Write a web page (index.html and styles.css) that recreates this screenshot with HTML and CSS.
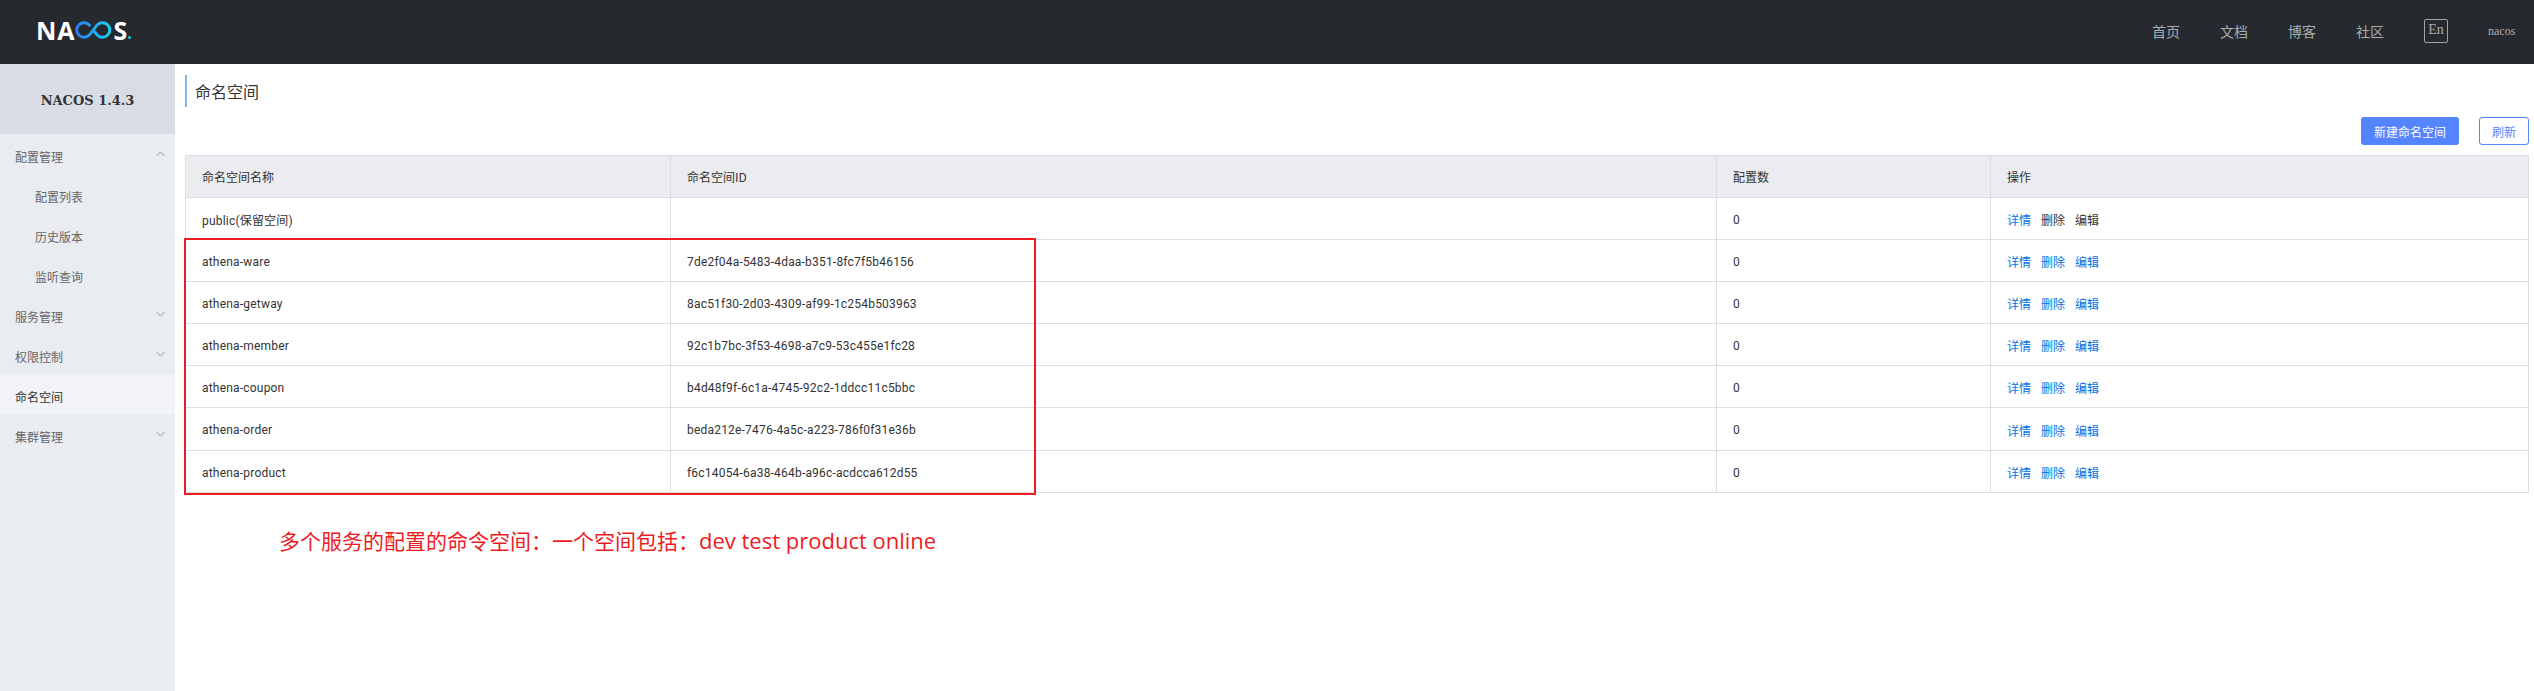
FILE: index.html
```html
<!DOCTYPE html>
<html lang="zh">
<head>
<meta charset="utf-8">
<title>Nacos</title>
<link rel="stylesheet" href="styles.css">
</head>
<body>
<header class="topbar">
  <div class="logo">
    <span class="logo-text">NA</span>
    <svg class="logo-inf" width="37" height="18" viewBox="0 0 37 18" aria-hidden="true">
      <defs><linearGradient id="inf" x1="0" x2="1" y1="0" y2="0"><stop offset="0" stop-color="#2e7bf5"/><stop offset="1" stop-color="#17d0f0"/></linearGradient></defs>
      <path d="M14.5 4.2A7.3 7.3 0 1 0 14.5 13.8L22 4.2A7.3 7.3 0 1 1 22 13.8L19.8 11" fill="none" stroke="url(#inf)" stroke-width="3" stroke-linecap="round"/>
    </svg>
    <span class="logo-text">S</span>
    <span class="logo-dot"></span>
  </div>
  <nav class="topnav">
    <a class="topnav-link">首页</a>
    <a class="topnav-link">文档</a>
    <a class="topnav-link">博客</a>
    <a class="topnav-link">社区</a>
    <span class="lang">En</span>
    <span class="user">nacos</span>
  </nav>
</header>
<div class="shell">
  <aside class="sidebar">
    <div class="brand">NACOS 1.4.3</div>
    <ul class="menu">
      <li class="menu-item">配置管理<svg class="chev" width="9" height="6" viewBox="0 0 9 6"><path d="M.5 5 4.5 1l4 4" fill="none" stroke="#999"/></svg></li>
      <li class="menu-item sub">配置列表</li>
      <li class="menu-item sub">历史版本</li>
      <li class="menu-item sub">监听查询</li>
      <li class="menu-item">服务管理<svg class="chev" width="9" height="6" viewBox="0 0 9 6"><path d="M.5 1l4 4 4-4" fill="none" stroke="#999"/></svg></li>
      <li class="menu-item">权限控制<svg class="chev" width="9" height="6" viewBox="0 0 9 6"><path d="M.5 1l4 4 4-4" fill="none" stroke="#999"/></svg></li>
      <li class="menu-item active">命名空间</li>
      <li class="menu-item">集群管理<svg class="chev" width="9" height="6" viewBox="0 0 9 6"><path d="M.5 1l4 4 4-4" fill="none" stroke="#999"/></svg></li>
    </ul>
  </aside>
  <main class="content">
    <h1 class="title">命名空间</h1>
    <div class="actions">
      <button class="btn primary">新建命名空间</button>
      <button class="btn outline">刷新</button>
    </div>
    <table class="grid">
      <colgroup><col class="c1"><col class="c2"><col class="c3"><col class="c4"></colgroup>
      <thead><tr><th>命名空间名称</th><th>命名空间ID</th><th>配置数</th><th>操作</th></tr></thead>
      <tbody>
        <tr><td>public(保留空间)</td><td></td><td>0</td><td><a class="op">详情</a><a class="op off">删除</a><a class="op off">编辑</a></td></tr>
        <tr><td>athena-ware</td><td>7de2f04a-5483-4daa-b351-8fc7f5b46156</td><td>0</td><td><a class="op">详情</a><a class="op">删除</a><a class="op">编辑</a></td></tr>
        <tr><td>athena-getway</td><td>8ac51f30-2d03-4309-af99-1c254b503963</td><td>0</td><td><a class="op">详情</a><a class="op">删除</a><a class="op">编辑</a></td></tr>
        <tr><td>athena-member</td><td>92c1b7bc-3f53-4698-a7c9-53c455e1fc28</td><td>0</td><td><a class="op">详情</a><a class="op">删除</a><a class="op">编辑</a></td></tr>
        <tr><td>athena-coupon</td><td>b4d48f9f-6c1a-4745-92c2-1ddcc11c5bbc</td><td>0</td><td><a class="op">详情</a><a class="op">删除</a><a class="op">编辑</a></td></tr>
        <tr class="tall"><td>athena-order</td><td>beda212e-7476-4a5c-a223-786f0f31e36b</td><td>0</td><td><a class="op">详情</a><a class="op">删除</a><a class="op">编辑</a></td></tr>
        <tr><td>athena-product</td><td>f6c14054-6a38-464b-a96c-acdcca612d55</td><td>0</td><td><a class="op">详情</a><a class="op">删除</a><a class="op">编辑</a></td></tr>
      </tbody>
    </table>
  </main>
</div>
<div class="redbox"></div>
<div class="note">多个服务的配置的命令空间：一个空间包括：<span class="note-latin">dev test product online</span></div>
</body>
</html>
```
FILE: styles.css
```css
* { box-sizing: border-box; }
html, body { margin: 0; padding: 0; }
body {
  position: relative;
  height: 691px;
  overflow: hidden;
  background: #fff;
  color: #333;
  font: 12px Roboto, "Noto Sans CJK SC", sans-serif;
}
.topbar {
  height: 64px;
  background: #262a2f;
  display: flex;
  align-items: center;
  justify-content: space-between;
  padding: 0 19px 0 36px;
}
.logo { display: flex; align-items: center; height: 18px; margin-top: -5px; }
.logo-text {
  font: 700 25px/18px "Open Sans", sans-serif;
  color: #fff;
  letter-spacing: 1px;
}
.logo-inf { margin: 0 2px 0 -1px; }
.logo-dot {
  width: 3px; height: 3px; border-radius: 50%;
  background: #17d0f0;
  align-self: flex-end;
}
.topnav {
  display: flex;
  align-items: center;
  padding-bottom: 2px;
  font-family: "Liberation Serif", "Noto Sans CJK SC", serif;
  color: #a9adb0;
}
.topnav-link { font-size: 14px; margin-right: 40px; }
.lang {
  width: 24px; height: 24px;
  border: 1px solid #a0a4a7;
  border-radius: 2px;
  font-size: 14px;
  line-height: 20px;
  text-align: center;
  margin-right: 40px;
}
.user { font-size: 12px; width: 27px; }
.shell { display: flex; height: 627px; }
.sidebar { width: 175px; flex: none; background: #e9ecf1; color: #666; }
.brand {
  height: 70px;
  background: #d8dde5;
  color: #333;
  font: 700 13px/74px "DejaVu Serif", "Liberation Serif", serif;
  text-align: center;
}
.menu { list-style: none; margin: 0; padding: 0; }
.menu-item {
  height: 40px;
  line-height: 46px;
  padding-left: 15px;
  position: relative;
  font-family: "Noto Sans CJK SC", sans-serif;
}
.menu-item.sub { padding-left: 35px; }
.menu-item.active { background: #f2f3f7; color: #333; }
.chev { position: absolute; right: 10px; top: 17px; }
.content { flex: 1; padding: 11px 6px 0 10px; }
.title {
  margin: 0;
  height: 32px;
  border-left: 2px solid #88b7e0;
  padding-left: 8px;
  font: 400 16px/32px "Noto Sans CJK SC", sans-serif;
  color: #333;
}
.actions { display: flex; justify-content: flex-end; gap: 20px; margin-top: 10px; }
.btn {
  height: 28px;
  border-radius: 3px;
  font: 12px "Noto Sans CJK SC", sans-serif;
  padding: 0;
}
.primary { width: 98px; background: #5584ff; border: 0; color: #fff; }
.outline { width: 50px; background: #fff; border: 1px solid #5584ff; color: #5584ff; }
.grid {
  margin-top: 10px;
  width: 2343px;
  table-layout: fixed;
  border-collapse: collapse;
  border: 1px solid #dcdee3;
}
.c1 { width: 485px; }
.c2 { width: 1046px; }
.c3 { width: 274px; }
.c4 { width: 538px; }
.grid th, .grid td {
  height: 42px;
  padding: 0 16px;
  border: 1px solid #dcdee3;
  text-align: left;
  font-weight: 400;
}
.grid td { padding-top: 2px; letter-spacing: .2px; }
.grid th { background: #ebecf0; font-family: "Noto Sans CJK SC", sans-serif; }
.grid tr.tall td { height: 43px; }
.op { color: #0073e6; margin-right: 10px; letter-spacing: 0; }
.op.off { color: #333; }
.redbox {
  position: absolute;
  left: 184px; top: 238px;
  width: 852px; height: 257px;
  border: 2px solid #ed1c24;
}
.note {
  position: absolute;
  left: 279px; top: 522px;
  font-size: 21px;
  line-height: 36px;
  color: #ed1c24;
}
.note-latin { font-family: "Open Sans", sans-serif; font-size: 22px; }
```
